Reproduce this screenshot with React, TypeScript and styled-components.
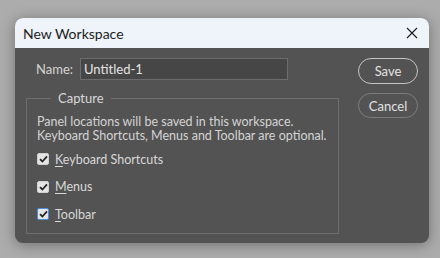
import React from 'react';
import styled, { createGlobalStyle } from 'styled-components';

const GlobalStyle = createGlobalStyle`
  html, body {
    margin: 0;
    padding: 0;
    background: #acacac;
  }
  body {
    font-family: Lato, "Noto Sans", sans-serif;
  }
`;

const Backdrop = styled.div`
  width: 440px;
  height: 258px;
  padding: 18px 11px 15px 15px;
  box-sizing: border-box;
  background: #acacac;
`;

const Dialog = styled.div`
  width: 414px;
  height: 225px;
  border-radius: 8px;
  overflow: hidden;
  background: #535353;
  box-shadow: 0 2px 14px rgba(0, 0, 0, 0.35);
  display: flex;
  flex-direction: column;
`;

const TitleBar = styled.div`
  height: 30px;
  flex: none;
  display: flex;
  align-items: center;
  justify-content: space-between;
  padding: 0 10px 0 8px;
  background: #eef4f9;
  color: #1c1c1c;
  font-size: 14px;
`;

const CloseButton = styled.button`
  border: none;
  background: none;
  padding: 0;
  width: 14px;
  height: 14px;
  display: flex;
  align-items: center;
  justify-content: center;
  cursor: pointer;
`;

const Body = styled.div`
  flex: 1;
  display: grid;
  grid-template-columns: 313px 60px;
  column-gap: 19px;
  padding: 10px 11px 10px 11px;
`;

const MainColumn = styled.div`
  display: flex;
  flex-direction: column;
`;

const NameRow = styled.div`
  display: flex;
  align-items: center;
  padding-left: 10px;
  height: 22px;
`;

const Label = styled.label`
  width: 44px;
  color: #d4d4d4;
  font-size: 13px;
`;

const TextInput = styled.input`
  width: 208px;
  height: 22px;
  box-sizing: border-box;
  background: #464646;
  border: 1px solid #6c6c6c;
  color: #e4e4e4;
  font-family: inherit;
  font-size: 13px;
  padding: 0 3px;
  outline: none;
`;

const GroupBox = styled.fieldset`
  margin: 10px 0 0 0;
  height: 144px;
  box-sizing: border-box;
  border: 1px solid #6e6e6e;
  padding: 0 10px;
  min-width: 0;
`;

const Legend = styled.legend`
  margin-left: 14px;
  padding: 0 7px;
  color: #d8d8d8;
  font-size: 13px;
`;

const Hint = styled.p`
  margin: 9px 0 9px 0;
  color: #d4d4d4;
  font-size: 12.5px;
  line-height: 14px;
  white-space: nowrap;
`;

const OptionList = styled.div`
  display: flex;
  flex-direction: column;
  gap: 13.5px;
`;

const Option = styled.label`
  display: flex;
  align-items: center;
  gap: 6px;
  height: 14px;
  color: #d8d8d8;
  font-size: 12.5px;
  cursor: pointer;
`;

const Box = styled.span<{ $focused?: boolean }>`
  width: 12px;
  height: 12px;
  box-sizing: border-box;
  border-radius: 2px;
  background: #e4e4e4;
  border: ${(p) => (p.$focused ? '1.5px solid #4c8fdc' : '1px solid #d0d0d0')};
  display: flex;
  align-items: center;
  justify-content: center;
`;

const Mnemonic = styled.span`
  text-decoration: underline;
  text-underline-offset: 2px;
`;

const ButtonColumn = styled.div`
  display: flex;
  flex-direction: column;
  gap: 9px;
`;

const PillButton = styled.button<{ $primary?: boolean }>`
  width: 60px;
  height: ${(p) => (p.$primary ? '26px' : '25px')};
  border-radius: 13px;
  background: transparent;
  border: ${(p) => (p.$primary ? '1.5px solid #c4c4c4' : '1px solid #7c7c7c')};
  color: #e2e2e2;
  font-family: inherit;
  font-size: 13px;
  padding: 0;
  cursor: pointer;
`;

const Check = () => (
  <svg width="9" height="8" viewBox="0 0 9 8">
    <path d="M1 4.2 L3.4 6.5 L8 1.4" fill="none" stroke="#262626" strokeWidth="1.8" />
  </svg>
);

const options = [
  { key: 'K', rest: 'eyboard Shortcuts' },
  { key: 'M', rest: 'enus' },
  { key: 'T', rest: 'oolbar', focused: true },
];

const App: React.FC = () => {
  return (
    <>
      <GlobalStyle />
      <Backdrop>
        <Dialog>
          <TitleBar>
            <span>New Workspace</span>
            <CloseButton aria-label="Close">
              <svg width="12" height="12" viewBox="0 0 12 12">
                <path d="M1 1 L11 11 M11 1 L1 11" stroke="#1c1c1c" strokeWidth="1.1" />
              </svg>
            </CloseButton>
          </TitleBar>
          <Body>
            <MainColumn>
              <NameRow>
                <Label>Name:</Label>
                <TextInput defaultValue="Untitled-1" />
              </NameRow>
              <GroupBox>
                <Legend>Capture</Legend>
                <Hint>
                  Panel locations will be saved in this workspace.
                  <br />
                  Keyboard Shortcuts, Menus and Toolbar are optional.
                </Hint>
                <OptionList>
                  {options.map((o) => (
                    <Option key={o.key}>
                      <Box $focused={o.focused}>
                        <Check />
                      </Box>
                      <span>
                        <Mnemonic>{o.key}</Mnemonic>
                        {o.rest}
                      </span>
                    </Option>
                  ))}
                </OptionList>
              </GroupBox>
            </MainColumn>
            <ButtonColumn>
              <PillButton $primary>Save</PillButton>
              <PillButton>Cancel</PillButton>
            </ButtonColumn>
          </Body>
        </Dialog>
      </Backdrop>
    </>
  );
};

export default App;
